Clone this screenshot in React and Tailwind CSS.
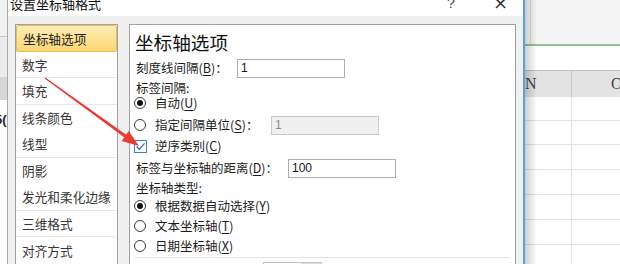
const NAV = [
  { t: '坐标轴选项', on: true },
  { t: '数字', sep: true },
  { t: '填充', sep: true },
  { t: '线条颜色' },
  { t: '线型', sep: true },
  { t: '阴影' },
  { t: '发光和柔化边缘', sep: true },
  { t: '三维格式', sep: true },
  { t: '对齐方式' },
];

function Key({ k }) {
  return (
    <>
      (<span className="underline underline-offset-2">{k}</span>)
    </>
  );
}

function Radio({ on }) {
  return (
    <span className="ml-[4px] w-[12px] h-[12px] shrink-0 rounded-full border border-[#3a3a3a] bg-white flex items-center justify-center">
      {on && <span className="w-[6px] h-[6px] rounded-full bg-[#111]" />}
    </span>
  );
}

function Box({ value, off, w }) {
  return (
    <div
      className={
        'h-[19px] flex items-center pl-[3px] text-[12px] font-["Liberation_Sans",sans-serif] border ' +
        (off ? 'bg-[#f0f0f0] border-[#c9c9c9] text-[#8a8a8a]' : 'bg-white border-[#abadb3] text-[#111]')
      }
      style={{ width: w }}
    >
      {value}
    </div>
  );
}

function Arrow() {
  return (
    <svg className="absolute left-0 top-0 pointer-events-none" width="620" height="264">
      <polygon
        fill="#ea3a34"
        points="45.4,77.4 126.1,134.8 128.7,131.1 139,146 121.7,140.9 124.3,137.2 44.6,78.6"
      />
    </svg>
  );
}

export default function App() {
  return (
    <div className="relative w-[620px] h-[264px] overflow-hidden flex bg-white text-[#1c1c1c] font-['Noto_Sans_CJK_SC',sans-serif]">
      {/* excel behind, left */}
      <div className="w-[7px] shrink-0 flex flex-col overflow-hidden">
        <div className="h-[36px] shrink-0 bg-[#f1f1f1]" />
        <div className="h-[1px] shrink-0 bg-[#b9d3b9]" />
        <div className="h-[40px] shrink-0 bg-[#ececec]" />
        <div className="h-[23px] shrink-0 bg-[#d7d7d7]" />
        <div className="h-[12px] shrink-0 bg-white" />
        <div className="-ml-[5px] shrink-0 text-[13px] leading-[16px] font-bold text-[#222] font-['Liberation_Sans',sans-serif]">5(</div>
        <div className="flex-1 bg-white" />
      </div>

      {/* dialog */}
      <div className="w-[518px] shrink-0 flex flex-col overflow-hidden border-l border-[#a9a9a9] border-r-2 border-r-[#5b9fe2]">
        <div className="h-[16px] shrink-0 bg-white flex items-start">
          <span className="ml-[2px] -mt-[3px] text-[13px] leading-[13px] text-[#111]">设置坐标轴格式</span>
          <span className="ml-auto -mt-[4px] text-[14px] leading-[14px] text-[#444] font-['Liberation_Sans',sans-serif]">?</span>
          <span className="ml-[38px] mr-[15px] -mt-[5px] text-[18px] leading-[16px] text-[#333] font-['DejaVu_Sans',sans-serif]">×</span>
        </div>
        <div className="flex-1 min-h-0 overflow-hidden bg-[#f0f0f0] flex items-start pl-[7px] pt-[8px]">
          <div className="w-[103px] shrink-0 border border-[#a0a0a0] bg-white flex flex-col">
            {NAV.map((n) => (
              <div
                key={n.t}
                className={
                  'h-[26.5px] shrink-0 flex items-center pl-[6px] text-[12.7px] ' +
                  (n.on
                    ? 'bg-gradient-to-b from-[#feedb2] to-[#fbd774] border border-[#e3bd5c] rounded-[2px] text-[#222]'
                    : 'text-[#363636] ' + (n.sep ? 'border-b border-[#e6e6e6]' : ''))
                }
              >
                {n.t}
              </div>
            ))}
          </div>

          <div className="ml-[11px] w-[387px] shrink-0 border border-[#a0a0a0] bg-white flex flex-col text-[12.5px]">
            <div className="mt-[5px] h-[24px] shrink-0 pl-[5px] flex items-center text-[18.6px] text-[#111]">坐标轴选项</div>
            <div className="mt-[4px] h-[20px] shrink-0 pl-[6px] flex items-center">
              <span className="w-[101px]">刻度线间隔<Key k="B" />：</span>
              <Box value="1" w={108} />
            </div>
            <div className="mt-[3px] h-[14px] shrink-0 pl-[6px] flex items-center">标签间隔:</div>
            <div className="mt-[1px] h-[14px] shrink-0 flex items-center">
              <Radio on />
              <span className="ml-[9px]">自动<Key k="U" /></span>
            </div>
            <div className="mt-[5px] h-[20px] shrink-0 flex items-center">
              <Radio />
              <span className="ml-[9px] w-[116px]">指定间隔单位<Key k="S" />：</span>
              <Box value="1" off w={108} />
            </div>
            <div className="mt-[4px] h-[14px] shrink-0 flex items-center">
              <span className="ml-[4px] w-[13px] h-[13px] shrink-0 border border-[#3d7fc8] bg-white flex items-center justify-center">
                <svg width="11" height="11" viewBox="0 0 11 11">
                  <path d="M1.5 5.5 L4.3 8.3 L9.6 2.4" fill="none" stroke="#2f6fbf" strokeWidth="1.3" />
                </svg>
              </span>
              <span className="ml-[8px]">逆序类别<Key k="C" /></span>
            </div>
            <div className="mt-[5px] h-[20px] shrink-0 pl-[6px] flex items-center">
              <span className="w-[152px]">标签与坐标轴的距离<Key k="D" />：</span>
              <Box value="100" w={108} />
            </div>
            <div className="mt-[3px] h-[14px] shrink-0 pl-[6px] flex items-center">坐标轴类型:</div>
            <div className="mt-[4px] h-[14px] shrink-0 flex items-center">
              <Radio on />
              <span className="ml-[9px]">根据数据自动选择<Key k="Y" /></span>
            </div>
            <div className="mt-[6px] h-[14px] shrink-0 flex items-center">
              <Radio />
              <span className="ml-[9px]">文本坐标轴<Key k="T" /></span>
            </div>
            <div className="mt-[6px] h-[14px] shrink-0 flex items-center">
              <Radio />
              <span className="ml-[9px]">日期坐标轴<Key k="X" /></span>
            </div>
            <div className="mt-[4px] mx-[5px] h-[1px] shrink-0 bg-[#e3e3e3]" />
            <div className="mt-[4px] ml-[133px] w-[59px] h-[10px] shrink-0 border border-[#c4c4c4] flex">
              <div className="flex-1 bg-white" />
              <div className="w-[20px] bg-[#dedede]" />
            </div>
          </div>
        </div>
      </div>

      {/* excel behind, right */}
      <div className="flex-1 flex flex-col relative">
        <div className="h-[44px] shrink-0 bg-[#f4f4f4] flex">
          <div className="w-[5px] bg-[#fbfbfb]" />
          <div className="w-[1px] bg-[#cfe5cf]" />
          <div className="flex-1" />
        </div>
        <div className="h-[2px] shrink-0 bg-[#93c393]" />
        <div className="h-[24px] shrink-0 bg-white" />
        <div className="h-[27px] shrink-0 border-t border-[#c2c2c2] bg-[#e3e3e3] flex text-[16px] text-[#444] font-['Liberation_Serif',serif]">
          <div className="w-[47px] border-r border-[#c6c6c6] flex items-center">N</div>
          <div className="flex-1 flex items-center pl-[39px]">O</div>
        </div>
        {[24, 24, 25, 25, 25, 25, 25].map((h, i) => (
          <div key={i} className="flex shrink-0 border-b border-[#e2e2e2]" style={{ height: h }}>
            <div className="w-[47px] border-r border-[#e2e2e2]" />
          </div>
        ))}
        <div className="absolute left-0 top-0 bottom-0 w-[12px] bg-gradient-to-r from-[#00000030] to-transparent" />
      </div>

      <Arrow />
    </div>
  );
}
